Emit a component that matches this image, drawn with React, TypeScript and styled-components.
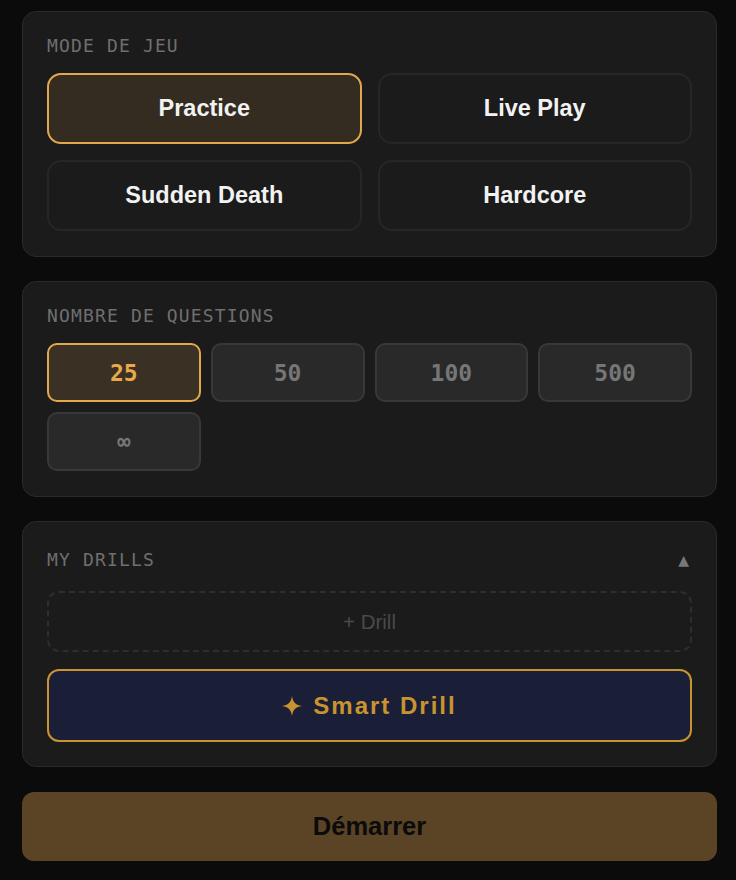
import { useState } from 'react';
import styled, { createGlobalStyle } from 'styled-components';

const GlobalStyle = createGlobalStyle`
  html, body {
    margin: 0;
    padding: 0;
    background-color: #0b0b0b;
  }
  * {
    box-sizing: border-box;
  }
`;

const Page = styled.div`
  display: flex;
  flex-direction: column;
  gap: 24px;
  padding: 11px 19px 19px 22px;
  font-family: 'Liberation Sans', Arial, sans-serif;
`;

const Card = styled.section`
  background-color: #1b1b1b;
  border: 1px solid #2a2a2a;
  border-radius: 14px;
  padding: 24px 24px ${(p) => (p.$tight ? '24px' : '25px')};
`;

const CardHeader = styled.div`
  display: flex;
  align-items: ${(p) => (p.$tall ? 'center' : 'flex-start')};
  justify-content: space-between;
  height: ${(p) => (p.$tall ? '28px' : '23px')};
  margin-bottom: ${(p) => (p.$tall ? '17px' : '14px')};
`;

const Label = styled.h3`
  margin: 0;
  font-family: 'DejaVu Sans Mono', 'Liberation Mono', monospace;
  font-size: 18px;
  line-height: 20px;
  font-weight: 400;
  letter-spacing: 1.15px;
  color: #6f6f6f;
`;

const Toggle = styled.button`
  background: none;
  border: none;
  padding: 0 3px 0 0;
  color: #777;
  font-size: 14px;
  line-height: 1;
  cursor: pointer;
  font-family: 'DejaVu Sans', sans-serif;
`;

const ModeGrid = styled.div`
  display: grid;
  grid-template-columns: 1fr 1fr;
  gap: 16px;
`;

const ModeButton = styled.button`
  height: 71px;
  border-radius: 14px;
  border: 2px solid ${(p) => (p.$active ? '#e2a94c' : '#262626')};
  background-color: ${(p) => (p.$active ? '#342c21' : '#1b1b1b')};
  color: #f2f2f2;
  font-family: 'Liberation Sans', Arial, sans-serif;
  font-size: 23.5px;
  font-weight: 700;
  cursor: pointer;
`;

const CountGrid = styled.div`
  display: grid;
  grid-template-columns: repeat(4, 1fr);
  gap: 10px;
`;

const CountButton = styled.button`
  height: 59px;
  border-radius: 10px;
  border: 2px solid ${(p) => (p.$active ? '#e2a94c' : '#383838')};
  background-color: ${(p) => (p.$active ? '#3a3124' : '#292929')};
  color: ${(p) => (p.$active ? '#e8aa4a' : '#767676')};
  font-family: 'DejaVu Sans Mono', 'Liberation Mono', monospace;
  font-size: ${(p) => (p.$small ? '22px' : '23px')};
  font-weight: 700;
  cursor: pointer;
`;

const DrillStack = styled.div`
  display: flex;
  flex-direction: column;
  gap: 17px;
`;

const AddDrill = styled.button`
  height: 61px;
  border-radius: 12px;
  border: 2px dashed #2e2e2e;
  background: transparent;
  color: #4a4a4a;
  font-family: 'Liberation Sans', Arial, sans-serif;
  font-size: 20.5px;
  cursor: pointer;
`;

const SmartDrill = styled.button`
  height: 73px;
  border-radius: 12px;
  border: 2px solid #c8942f;
  background-color: #1a1e36;
  color: #c8942f;
  font-family: 'Liberation Sans', Arial, sans-serif;
  font-size: 24px;
  font-weight: 700;
  letter-spacing: 2px;
  display: flex;
  align-items: center;
  justify-content: center;
  gap: 11px;
  cursor: pointer;
`;

const StartButton = styled.button`
  height: 69px;
  margin-top: 1px;
  border: none;
  border-radius: 12px;
  background-color: #5a4425;
  color: #0b0b0b;
  font-family: 'Liberation Sans', Arial, sans-serif;
  font-size: 25.5px;
  font-weight: 700;
  cursor: pointer;
`;

const Sparkle = () => (
  <svg width="20" height="20" viewBox="0 0 20 20" aria-hidden="true">
    <path
      d="M10 0 C10.8 6 13.5 9.2 20 10 C13.5 10.8 10.8 14 10 20 C9.2 14 6.5 10.8 0 10 C6.5 9.2 9.2 6 10 0 Z"
      fill="currentColor"
    />
  </svg>
);

const modes = ['Practice', 'Live Play', 'Sudden Death', 'Hardcore'];
const counts = ['25', '50', '100', '500', '∞'];

export default function App() {
  const [mode, setMode] = useState('Practice');
  const [count, setCount] = useState('25');
  const [open, setOpen] = useState(true);

  return (
    <>
      <GlobalStyle />
      <Page>
        <Card>
          <CardHeader>
            <Label>MODE DE JEU</Label>
          </CardHeader>
          <ModeGrid>
            {modes.map((m) => (
              <ModeButton key={m} $active={m === mode} onClick={() => setMode(m)}>
                {m}
              </ModeButton>
            ))}
          </ModeGrid>
        </Card>

        <Card>
          <CardHeader>
            <Label>NOMBRE DE QUESTIONS</Label>
          </CardHeader>
          <CountGrid>
            {counts.map((c) => (
              <CountButton
                key={c}
                $active={c === count}
                $small={c === '∞'}
                onClick={() => setCount(c)}
              >
                {c}
              </CountButton>
            ))}
          </CountGrid>
        </Card>

        <Card $tight>
          <CardHeader $tall>
            <Label>MY DRILLS</Label>
            <Toggle onClick={() => setOpen(!open)}>{open ? '▲' : '▼'}</Toggle>
          </CardHeader>
          {open && (
            <DrillStack>
              <AddDrill>+ Drill</AddDrill>
              <SmartDrill>
                <Sparkle />
                Smart Drill
              </SmartDrill>
            </DrillStack>
          )}
        </Card>

        <StartButton>Démarrer</StartButton>
      </Page>
    </>
  );
}
